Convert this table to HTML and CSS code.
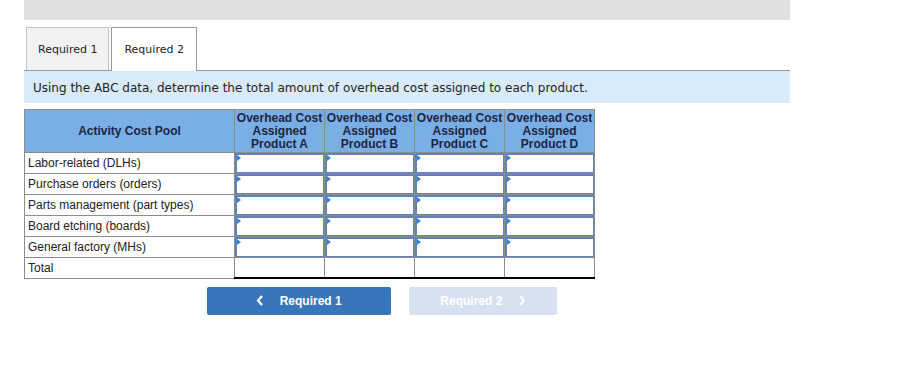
FILE: index.html
```html
<!DOCTYPE html>
<html lang="en">
<head>
  <meta charset="UTF-8">
  <title>ABC Overhead Allocation</title>
  <link rel="stylesheet" href="styles.css">
</head>
<body>
  <div id="container">
    <div class="top-bar"></div>

    <!-- Tabs -->
    <div class="tabs">
      <button class="tab">Required 1</button>
      <button class="tab active">Required 2</button>
    </div>

    <div class="prompt">Using the ABC data, determine the total amount of overhead cost assigned to each product.</div>

    <table class="cost-table">
      <thead>
        <tr>
          <th class="pool-col">Activity Cost Pool</th>
          <th>Overhead Cost<br>Assigned<br>Product A</th>
          <th>Overhead Cost<br>Assigned<br>Product B</th>
          <th>Overhead Cost<br>Assigned<br>Product C</th>
          <th>Overhead Cost<br>Assigned<br>Product D</th>
        </tr>
      </thead>
      <tbody>
        <tr>
          <td class="label">Labor-related (DLHs)</td>
          <td class="entry"><input type="text"></td>
          <td class="entry"><input type="text"></td>
          <td class="entry"><input type="text"></td>
          <td class="entry"><input type="text"></td>
        </tr>
        <tr>
          <td class="label">Purchase orders (orders)</td>
          <td class="entry"><input type="text"></td>
          <td class="entry"><input type="text"></td>
          <td class="entry"><input type="text"></td>
          <td class="entry"><input type="text"></td>
        </tr>
        <tr>
          <td class="label">Parts management (part types)</td>
          <td class="entry"><input type="text"></td>
          <td class="entry"><input type="text"></td>
          <td class="entry"><input type="text"></td>
          <td class="entry"><input type="text"></td>
        </tr>
        <tr>
          <td class="label">Board etching (boards)</td>
          <td class="entry"><input type="text"></td>
          <td class="entry"><input type="text"></td>
          <td class="entry"><input type="text"></td>
          <td class="entry"><input type="text"></td>
        </tr>
        <tr>
          <td class="label">General factory (MHs)</td>
          <td class="entry"><input type="text"></td>
          <td class="entry"><input type="text"></td>
          <td class="entry"><input type="text"></td>
          <td class="entry"><input type="text"></td>
        </tr>
        <tr class="total-row">
          <td class="label">Total</td>
          <td class="total"></td>
          <td class="total"></td>
          <td class="total"></td>
          <td class="total"></td>
        </tr>
      </tbody>
    </table>

    <!-- Prev / next -->
    <div class="nav-buttons">
      <button class="nav-btn prev">
        <svg class="chev" width="8" height="11" viewBox="0 0 8 11"><polyline points="6,1 2,5.5 6,10" fill="none" stroke="#fff" stroke-width="2.2"/></svg>
        Required 1
      </button>
      <button class="nav-btn next" disabled>
        Required 2
        <svg class="chev" width="8" height="11" viewBox="0 0 8 11"><polyline points="2,1 6,5.5 2,10" fill="none" stroke="#fff" stroke-width="2.2"/></svg>
      </button>
    </div>
  </div>
</body>
</html>
```

FILE: styles.css
```css
:root {
  --header-blue: #7aaee6;
  --band-blue: #d9ebf9;
  --input-border: #6283b6;
  --cell-border: #8c8c8c;
  --btn-blue: #3875bb;
  --btn-disabled: #d6e2f0;
}

body {
  margin: 0;
  background: #fff;
  font-family: "DejaVu Sans", Verdana, sans-serif;
  color: #222;
}

#container {
  width: 766px;
  margin-left: 24px;
}

.top-bar {
  height: 20px;
  background: #e0e0e0;
}

/* Tabs */
.tabs {
  display: flex;
  gap: 2px;
  margin-top: 7px;
  padding-left: 2px;
  border-bottom: 1px solid #999;
  height: 43px;
}
.tab {
  height: 43px;
  padding: 0 11px;
  font-family: "DejaVu Sans", Verdana, sans-serif;
  font-size: 11px;
  color: #222;
  background: #f2f2f2;
  border: 1px solid #c4c4c4;
  border-bottom: none;
  cursor: pointer;
}
.tab.active {
  background: #fff;
  border-color: #999;
  height: 44px;
  margin-bottom: -1px;
  padding: 0 12px;
}

.prompt {
  background: var(--band-blue);
  height: 32px;
  line-height: 34px;
  padding-left: 9px;
  font-size: 12px;
  color: #222;
}

/* Table */
.cost-table {
  margin-top: 6px;
  border-collapse: collapse;
  font-family: "Liberation Sans", Arial, sans-serif;
  font-size: 12px;
}
.cost-table th {
  background: var(--header-blue);
  border: 1px solid var(--cell-border);
  width: 89px;
  height: 42px;
  padding: 0;
  font-weight: bold;
  line-height: 13px;
  color: #1d2540;
}
.cost-table th.pool-col {
  width: 209px;
}
.cost-table td {
  border: 1px solid var(--cell-border);
  height: 20px;
  padding: 0;
}
.cost-table td.label {
  padding-left: 3px;
  color: #222;
}
.cost-table td.entry {
  position: relative;
  background: #fff;
}
.cost-table td.entry input {
  display: block;
  box-sizing: border-box;
  width: 100%;
  height: 20px;
  margin: 0;
  border: 2px solid var(--input-border);
  border-right-width: 1px;
  border-bottom-width: 1px;
  background: #fff;
  font: inherit;
}
/* little marker in the corner of each input */
.cost-table td.entry::before {
  content: "";
  position: absolute;
  left: 2px;
  top: 2px;
  border-top: 3px solid transparent;
  border-bottom: 3px solid transparent;
  border-left: 4px solid #3b7fd0;
  z-index: 1;
}
.cost-table .total-row td {
  height: 19px;
}
.cost-table td.total {
  border-bottom: 2px solid #000;
}

/* Prev / next buttons */
.nav-buttons {
  display: flex;
  gap: 18px;
  margin-top: 8px;
  padding-left: 183px;
}
.nav-btn {
  height: 28px;
  border: none;
  border-radius: 2px;
  color: #fff;
  font-family: "Liberation Sans", Arial, sans-serif;
  font-weight: bold;
  font-size: 12px;
  cursor: pointer;
}
.nav-btn.prev {
  width: 184px;
  background: var(--btn-blue);
}
.nav-btn.next {
  width: 148px;
  background: var(--btn-disabled);
  cursor: default;
}
.chev {
  vertical-align: -1px;
}
.prev .chev {
  margin-right: 12px;
}
.next .chev {
  margin-left: 12px;
}
```
